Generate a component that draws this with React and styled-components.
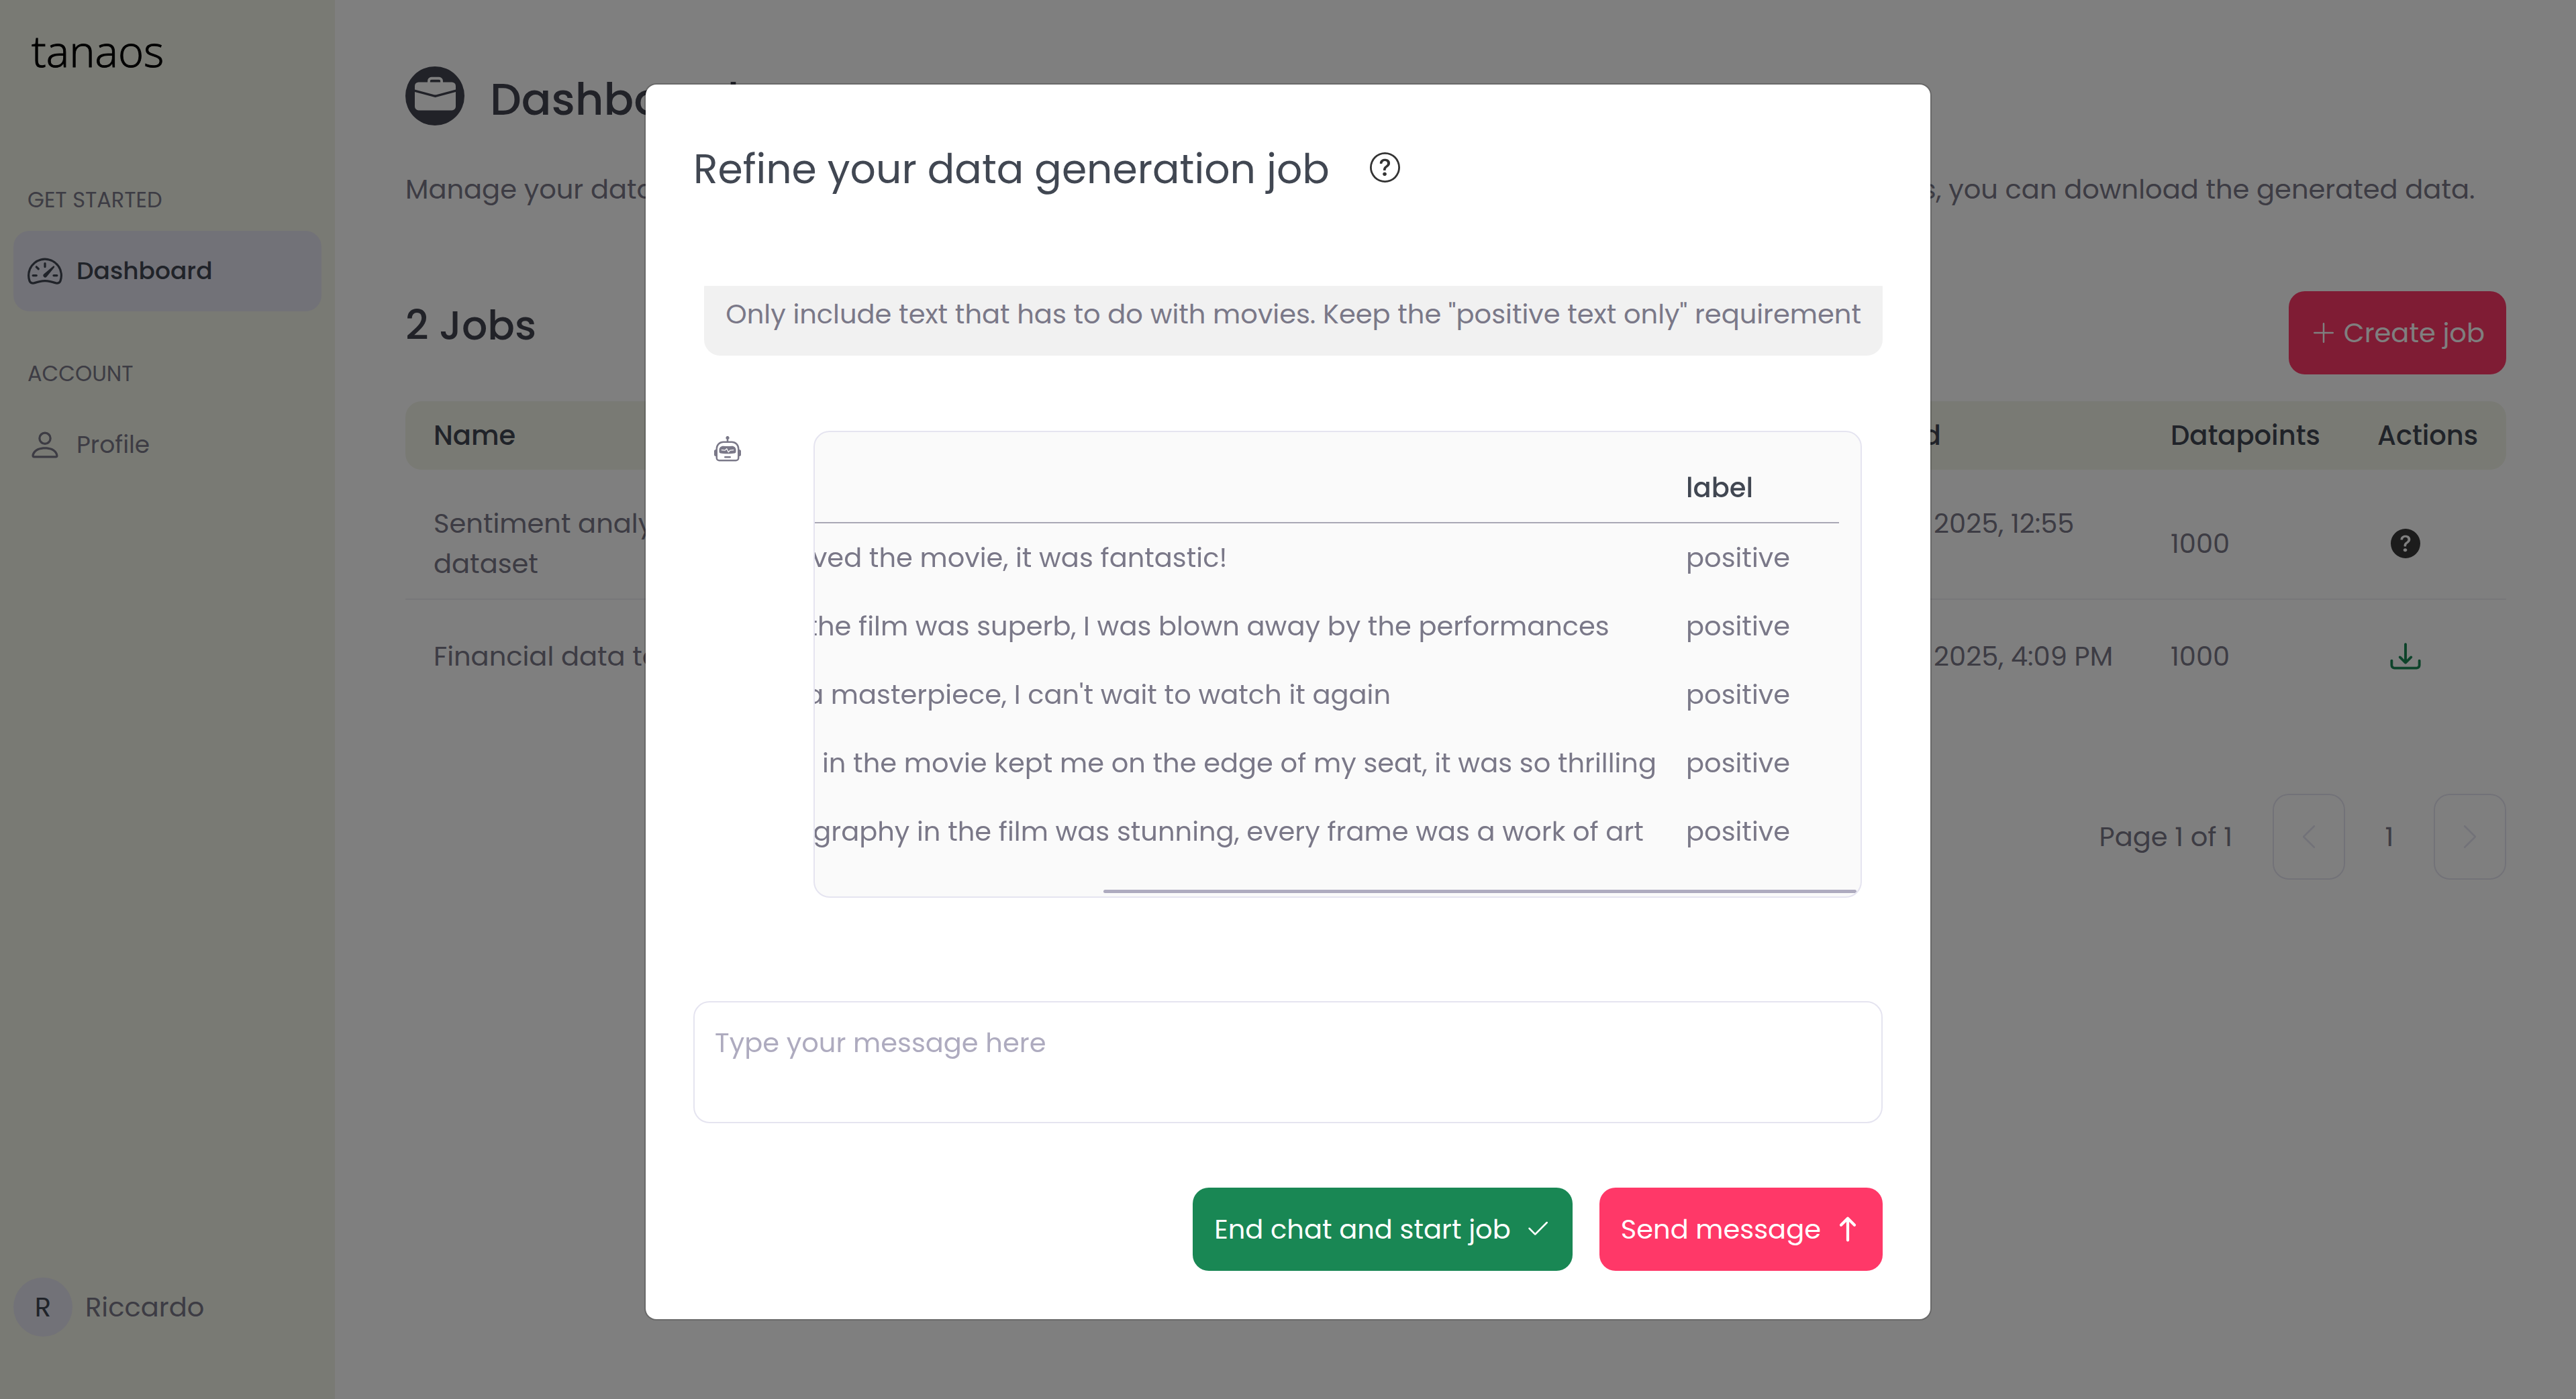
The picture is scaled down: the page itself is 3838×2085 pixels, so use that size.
import React from 'react';
import styled, { createGlobalStyle } from 'styled-components';
import {
  BsArrowUp,
  BsBriefcaseFill,
  BsCheck2,
  BsChevronLeft,
  BsChevronRight,
  BsDownload,
  BsPerson,
  BsPlusLg,
  BsQuestionCircle,
  BsQuestionCircleFill,
  BsRobot,
  BsSpeedometer2,
} from 'react-icons/bs';

const color = {
  sand: '#f2f4e8',
  lavender: '#e5e4f0',
  heading: '#434450',
  strong: '#414752',
  text: '#7a7888',
  muted: '#aeabbf',
  rule: '#a9a8b5',
  pink: '#ff3868',
  green: '#198754',
};

const GlobalStyle = createGlobalStyle`
  *, *::before, *::after { box-sizing: border-box; }
  body {
    margin: 0;
    background: #fff;
    color: ${color.text};
    font: 400 40px/60px Poppins, Inter, "Open Sans", sans-serif;
  }
  h1, h2, p { margin: 0; font-weight: inherit; }
  button, textarea { font: inherit; }
  svg { display: block; flex: none; }
`;

/* ---------- page shell ---------- */

const Page = styled.div`
  display: flex;
  min-height: 100vh;
`;

const Sidebar = styled.aside`
  display: flex;
  flex-direction: column;
  flex: none;
  width: 499px;
  padding: 27px 20px 93px;
  background: ${color.sand};
`;

const Logo = styled.div`
  margin-bottom: 155px;
  padding-left: 27px;
  color: #000;
  font: 300 65px/96px "Open Sans", "Noto Sans", sans-serif;
  -webkit-text-stroke: 1px #000;
`;

const NavGroup = styled.nav`
  margin-bottom: 73px;
`;

const NavLabel = styled.div`
  margin-bottom: 26px;
  padding-left: 21px;
  font-size: 32px;
  line-height: 40px;
  text-transform: uppercase;
`;

const NavItem = styled.a`
  display: flex;
  align-items: center;
  gap: 21px;
  height: 120px;
  padding: 0 21px;
  border-radius: 24px;
  background: ${(p) => (p.$active ? color.lavender : 'transparent')};
  color: ${(p) => (p.$active ? color.strong : color.text)};
  font-size: 36px;
  font-weight: ${(p) => (p.$active ? 500 : 400)};
  text-decoration: none;

  svg { font-size: 52px; }
`;

const UserRow = styled.div`
  display: flex;
  align-items: center;
  gap: 19px;
  margin-top: auto;
`;

const Avatar = styled.div`
  display: grid;
  place-items: center;
  width: 88px;
  height: 88px;
  border-radius: 50%;
  background: ${color.lavender};
  color: ${color.strong};
`;

const Main = styled.main`
  flex: 1;
  min-width: 0;
  padding: 99px 104px 99px 105px;
`;

const TitleRow = styled.div`
  display: flex;
  align-items: flex-start;
  gap: 38px;
  margin-bottom: 55px;
`;

const TitleIcon = styled.div`
  display: grid;
  place-items: center;
  width: 88px;
  height: 88px;
  padding-bottom: 4px;
  border-radius: 50%;
  background: ${color.heading};
  color: #fff;
  font-size: 61px;
`;

const PageTitle = styled.h1`
  color: ${color.heading};
  font-size: 66px;
  font-weight: 500;
  line-height: 98px;
`;

const Description = styled.p`
  margin-bottom: 122px;
  white-space: nowrap;
`;

const JobsHeader = styled.div`
  display: flex;
  align-items: flex-start;
  justify-content: space-between;
  margin-bottom: 40px;
`;

const JobsTitle = styled.h2`
  color: ${color.heading};
  font-size: 60px;
  font-weight: 500;
  line-height: 102px;
`;

const Button = styled.button`
  display: flex;
  align-items: center;
  gap: ${(p) => (p.$leading ? 10 : 20)}px;
  height: 124px;
  padding: 0 32px;
  border: 0;
  border-radius: 24px;
  background: ${(p) => (p.$tone === 'green' ? color.green : color.pink)};
  color: #fff;

  svg {
    font-size: 40px;
    overflow: visible;
    stroke: currentColor;
    stroke-width: ${(p) => (p.$bold ? 0.7 : 0)};
  }
`;

const JobsTable = styled.table`
  width: 100%;
  table-layout: fixed;
  border-spacing: 0;

  th {
    height: 102px;
    padding: 0 42px;
    background: ${color.sand};
    color: ${color.strong};
    font-weight: 500;
    text-align: left;
  }
  th:first-child { border-radius: 24px 0 0 24px; }
  th:last-child { border-radius: 0 24px 24px 0; }

  td { padding: 50px 38px 22px 42px; }
  tr + tr td { padding-top: 54px; }
  tr:not(:last-child) td { border-bottom: 2px solid #efeef3; }
`;

const Col = styled.col`
  width: ${(p) => (p.$w ? `${p.$w}px` : 'auto')};
`;

const ActionIcon = styled.div`
  padding-left: 20px;
  color: ${(p) => (p.$tone === 'green' ? color.green : '#383838')};
  font-size: 44px;

  svg {
    overflow: visible;
    stroke: currentColor;
    stroke-width: ${(p) => (p.$tone === 'green' ? 0.4 : 0)};
  }
`;

const Pagination = styled.div`
  display: flex;
  align-items: center;
  justify-content: flex-end;
  margin-top: 153px;
`;

const PageCount = styled.span`
  margin-right: 60px;
`;

const PageNumber = styled.span`
  width: 132px;
  text-align: center;
`;

const PagerButton = styled.button`
  display: grid;
  place-items: center;
  width: 108px;
  height: 128px;
  padding: 0;
  border: 2px solid ${color.lavender};
  border-radius: 24px;
  background: transparent;
  color: ${color.lavender};

  svg { font-size: 42px; }
`;

/* ---------- modal ---------- */

const Backdrop = styled.div`
  position: fixed;
  inset: 0;
  display: flex;
  align-items: flex-start;
  justify-content: center;
  padding: 124px 0;
  background: rgba(0, 0, 0, 0.5);
`;

const Modal = styled.section`
  display: flex;
  flex-direction: column;
  width: 1918px;
  max-width: 100%;
  padding: 72px 71px;
  border: 2px solid rgba(0, 0, 0, 0.175);
  border-radius: 18px;
  background: #fff;
  background-clip: padding-box;
`;

const ModalHeader = styled.header`
  display: flex;
  align-items: center;
  gap: 60px;
  margin-bottom: 120px;
  color: #333;

  svg {
    margin-bottom: 6px;
    font-size: 45px;
  }
`;

const ModalTitle = styled.h2`
  color: ${color.strong};
  font-size: 60px;
  line-height: 108px;
`;

const Chat = styled.div`
  display: flex;
  flex-direction: column;
  justify-content: flex-end;
  gap: 112px;
  height: 944px;
  margin-bottom: 122px;
  padding-bottom: 32px;
  overflow: hidden;
`;

const Bubble = styled.p`
  flex: none;
  align-self: flex-end;
  padding: 32px;
  border-radius: 24px;
  background: #f1f1f1;
`;

const BotMessage = styled.div`
  display: flex;
  flex: none;
  align-items: flex-start;
  gap: 108px;
  padding: 0 31px;
`;

const BotIcon = styled.div`
  padding-top: 8px;
  font-size: 40px;
`;

const Sample = styled.div`
  flex: 1;
  min-width: 0;
  border: 2px solid ${color.lavender};
  border-radius: 24px;
  background: #fafafa;
  overflow: hidden;
`;

const SampleScroll = styled.div`
  display: flex;
  justify-content: flex-end;
  padding: 32px 32px 32px 0;
`;

const SampleTable = styled.table`
  flex: none;
  border-spacing: 0;
  white-space: nowrap;

  th, td {
    height: 102px;
    padding: 0 22px;
    text-align: left;
  }
  th {
    height: 104px;
    border-bottom: 2px solid ${color.rule};
    color: ${color.strong};
    font-weight: 500;
  }
  th:last-child { width: 250px; }
`;

const ScrollThumb = styled.div`
  width: 72%;
  height: 5px;
  margin: 4px 6px 5px auto;
  border-radius: 3px;
  background: ${color.muted};
`;

const MessageBox = styled.textarea`
  display: block;
  width: 100%;
  height: 182px;
  margin-bottom: 96px;
  padding: 30px;
  border: 2px solid ${color.lavender};
  border-radius: 24px;
  background: #fff;
  color: ${color.text};
  resize: none;
  outline: 0;

  &::placeholder { color: ${color.muted}; opacity: 1; }
`;

const ModalActions = styled.footer`
  display: flex;
  justify-content: flex-end;
  gap: 40px;
`;

const jobs = [
  { name: 'Sentiment analysis dataset', created: 'Mar 26, 2025, 12:55 PM', points: 1000, icon: <BsQuestionCircleFill /> },
  { name: 'Financial data topics', created: 'Mar 26, 2025, 4:09 PM', points: 1000, icon: <BsDownload />, tone: 'green' },
];

const samples = [
  'I absolutely loved the movie, it was fantastic!',
  'The acting in the film was superb, I was blown away by the performances',
  "This movie is a masterpiece, I can't wait to watch it again",
  'Action scenes in the movie kept me on the edge of my seat, it was so thrilling',
  'The cinematography in the film was stunning, every frame was a work of art',
];

export default function App() {
  return (
    <>
      <GlobalStyle />
      <Page>
        <Sidebar>
          <Logo>tanaos</Logo>
          <NavGroup aria-label="Get started">
            <NavLabel>Get started</NavLabel>
            <NavItem href="#dashboard" $active><BsSpeedometer2 />Dashboard</NavItem>
          </NavGroup>
          <NavGroup aria-label="Account">
            <NavLabel>Account</NavLabel>
            <NavItem href="#profile"><BsPerson />Profile</NavItem>
          </NavGroup>
          <UserRow><Avatar>R</Avatar>Riccardo</UserRow>
        </Sidebar>
        <Main>
          <TitleRow>
            <TitleIcon><BsBriefcaseFill /></TitleIcon>
            <PageTitle>Dashboard</PageTitle>
          </TitleRow>
          <Description>
            Manage your data generation jobs. Create a new job or check the status of the recent ones. Once a job completes, you can download the generated data.
          </Description>
          <JobsHeader>
            <JobsTitle>2 Jobs</JobsTitle>
            <Button type="button" $leading><BsPlusLg />Create job</Button>
          </JobsHeader>
          <JobsTable>
            <colgroup>
              <Col $w={560} />
              <Col />
              <Col $w={507} />
              <Col $w={308} />
              <Col $w={234} />
            </colgroup>
            <thead>
              <tr><th>Name</th><th>Status</th><th>Created</th><th>Datapoints</th><th>Actions</th></tr>
            </thead>
            <tbody>
              {jobs.map((job) => (
                <tr key={job.name}>
                  <td>{job.name}</td>
                  <td />
                  <td>{job.created}</td>
                  <td>{job.points}</td>
                  <td><ActionIcon $tone={job.tone}>{job.icon}</ActionIcon></td>
                </tr>
              ))}
            </tbody>
          </JobsTable>
          <Pagination>
            <PageCount>Page 1 of 1</PageCount>
            <PagerButton type="button" aria-label="Previous page"><BsChevronLeft /></PagerButton>
            <PageNumber>1</PageNumber>
            <PagerButton type="button" aria-label="Next page"><BsChevronRight /></PagerButton>
          </Pagination>
        </Main>
      </Page>
      <Backdrop>
        <Modal role="dialog" aria-labelledby="refine-title">
          <ModalHeader>
            <ModalTitle id="refine-title">Refine your data generation job</ModalTitle>
            <BsQuestionCircle />
          </ModalHeader>
          <Chat>
            <Bubble>Only include text that has to do with movies. Keep the "positive text only" requirement</Bubble>
            <BotMessage>
              <BotIcon><BsRobot /></BotIcon>
              <Sample>
                <SampleScroll>
                  <SampleTable>
                    <thead><tr><th>text</th><th>label</th></tr></thead>
                    <tbody>
                      {samples.map((text) => (
                        <tr key={text}><td>{text}</td><td>positive</td></tr>
                      ))}
                    </tbody>
                  </SampleTable>
                </SampleScroll>
                <ScrollThumb />
              </Sample>
            </BotMessage>
          </Chat>
          <MessageBox placeholder="Type your message here" aria-label="Message" />
          <ModalActions>
            <Button type="button" $tone="green">End chat and start job<BsCheck2 /></Button>
            <Button type="button" $bold>Send message<BsArrowUp /></Button>
          </ModalActions>
        </Modal>
      </Backdrop>
    </>
  );
}
